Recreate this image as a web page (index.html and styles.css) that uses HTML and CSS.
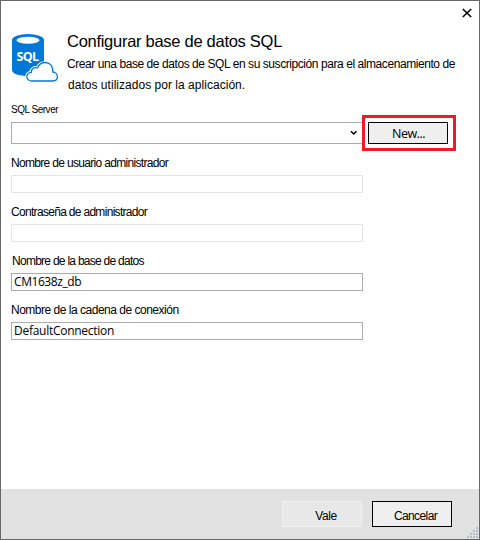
FILE: index.html
```html
<!DOCTYPE html>
<html lang="es">
<head>
<meta charset="utf-8">
<title>Configurar base de datos SQL</title>
<link rel="stylesheet" href="styles.css">
</head>
<body>
<main class="dialog">
  <button class="close" aria-label="Cerrar"><svg width="10" height="10" viewBox="0 0 10 10"><path d="M.8 1 9.200 9M9.200 1 .8 9" stroke="#000" stroke-width="1.600"/></svg></button>
  <header class="header">
    <svg class="logo" width="50" height="52" viewBox="0 0 50 52">
      <defs><path id="cloud" d="M21 47h20.500c2.700 0 4.900-1.500 4.900-4.200s-2-4.800-4.500-4.800c.5-5.500-3-9.500-7.600-9.500-3.700 0-6.600 2.200-7.700 5.300-4-1-6.600 1.400-6.300 4.600-2.900.2-4.500 2.100-4.500 4.300S18.300 47 21 47z"/></defs>
      <path d="M1 6v30c0 3.700 7 6 16 6s16-2.300 16-6V6z" fill="#0078d7"/>
      <ellipse cx="17" cy="6" rx="16" ry="6" fill="#0078d7"/>
      <ellipse cx="17" cy="6.200" rx="11.500" ry="3.500" fill="#fff"/>
      <text class="logo-text" x="5.500" y="27" textLength="22.500">SQL</text>
      <use href="#cloud" fill="#fff" stroke="#fff" stroke-width="3.200"/>
      <use href="#cloud" fill="#fff" stroke="#0078d7" stroke-width="1.300"/>
    </svg>
    <div class="intro">
      <h1 class="title">Configurar base de datos SQL</h1>
      <p class="line first">Crear una base de datos de SQL en su suscripción para el almacenamiento de</p>
      <p class="line second">datos utilizados por la aplicación.</p>
    </div>
  </header>
  <section class="form">
    <div class="label server-label"><span>SQL Server</span></div>
    <div class="server-row">
      <div class="select"><svg width="8" height="6" viewBox="0 0 8 6"><path d="M1 1.200 3.700 4 6.400 1.200" fill="none" stroke="#000" stroke-width="1.500"/></svg></div>
      <div class="highlight"><button class="button new">New...</button></div>
    </div>
    <div class="label user-label"><span>Nombre de usuario administrador</span></div>
    <div class="input disabled"></div>
    <div class="label password-label"><span>Contraseña de administrador</span></div>
    <div class="input disabled"></div>
    <div class="label database-label"><span>Nombre de la base de datos</span></div>
    <div class="input"><span class="value-db">CM1638z_db</span></div>
    <div class="label connection-label"><span>Nombre de la cadena de conexión</span></div>
    <div class="input"><span class="value-connection">DefaultConnection</span></div>
  </section>
  <footer class="footer">
    <button class="button ok">Vale</button>
    <button class="button cancel">Cancelar</button>
    <svg class="grip" width="12" height="12" viewBox="0 0 12 12" fill="#b8bcc8"><path d="M9 0h2v2H9zM6 3h2v2H6zM9 3h2v2H9zM3 6h2v2H3zM6 6h2v2H6zM9 6h2v2H9zM0 9h2v2H0zM3 9h2v2H3zM6 9h2v2H6zM9 9h2v2H9z"/></svg>
  </footer>
</main>
</body>
</html>
```
FILE: styles.css
```css
* { box-sizing: border-box; }
body { margin: 0; font-family: "Liberation Sans", Arial, sans-serif; color: #000; }
.dialog {
  position: relative;
  display: flex;
  flex-direction: column;
  width: 480px;
  height: 540px;
  border: 1px solid #666;
  background: #fff;
}
.close {
  position: absolute;
  top: 7px;
  right: 7px;
  display: flex;
  padding: 0;
  border: 0;
  background: none;
}
.header { display: flex; height: 102px; padding: 33px 0 0 10px; }
.logo { flex: none; }
.logo-text { font: bold 12.500px "Open Sans", sans-serif; fill: #fff; }
.intro { padding-left: 6px; white-space: nowrap; }
.title { margin: -3px 0 0; font-size: 16.500px; line-height: 20px; font-weight: 400; letter-spacing: -0.28px; }
.line { margin: 0; font-size: 12px; line-height: 21px; }
.first { padding-top: 3px; letter-spacing: -0.43px; }
.second { padding-left: 1px; letter-spacing: 0.03px; }
.form { display: flex; flex-direction: column; padding-left: 10px; }
.label { height: 31px; padding-top: 11px; font-size: 12px; line-height: 16px; white-space: nowrap; }
.server-label { height: 12px; padding: 1px 0 0; font-size: 10px; line-height: 12px; letter-spacing: -0.48px; }
.server-row { display: flex; height: 36px; }
.select {
  display: flex;
  justify-content: flex-end;
  width: 352px;
  height: 22px;
  margin-top: 7px;
  padding: 7px 4px 0 0;
  border: 1px solid #acacac;
}
.highlight { width: 94px; height: 36px; margin-left: -1px; padding: 4px 3px; border: 3px solid #ed1c24; background: #fff; }
.button {
  width: 80px;
  height: 26px;
  padding: 0;
  border: 1px solid #000;
  background: #efefef;
  color: #000;
  font: 12px "Liberation Sans", Arial, sans-serif;
}
.new { display: block; height: 22px; padding: 2px 0 0 1px; font: 12.500px "Open Sans", sans-serif; line-height: 18px; letter-spacing: -0.5px; }
.user-label { height: 24px; padding-top: 4px; letter-spacing: -0.68px; }
.password-label { letter-spacing: -0.69px; }
.input { width: 352px; height: 18px; padding-left: 2px; border: 1px solid #acacac; font: 12px/16px "Open Sans", sans-serif; }
.disabled { border-color: #e6e6e6; }
.database-label { padding-left: 1px; letter-spacing: -0.73px; }
.connection-label { letter-spacing: -0.49px; }
.value-db { letter-spacing: -0.43px; }
.value-connection { letter-spacing: -0.27px; }
.footer { position: relative; display: flex; gap: 10px; height: 50px; margin-top: auto; padding: 12px 0 0 281px; background: #e1e1e1; }
.ok { padding: 3px 0 0 8px; border-color: #f0f0f0; background: #e8e8e8; letter-spacing: -0.4px; }
.cancel { padding: 3px 0 0 7px; letter-spacing: -0.6px; }
.grip { position: absolute; right: 0; bottom: 0; }
```
